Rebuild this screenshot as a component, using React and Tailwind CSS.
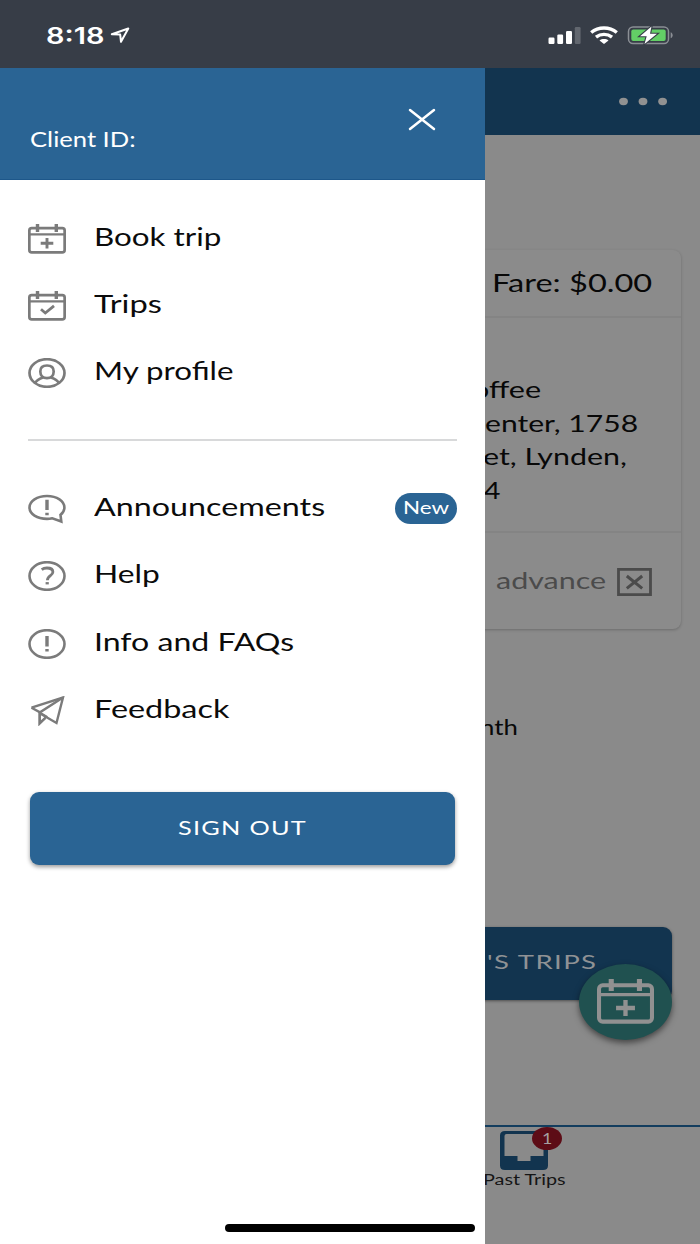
import { useLayoutEffect, useRef, useState } from "react";
import clsx from "clsx";

// Stretches one line of text horizontally so that it fills its box.
function FitText({ className, children }) {
  const outer = useRef(null);
  const inner = useRef(null);
  const [scale, setScale] = useState(1);
  useLayoutEffect(() => {
    setScale(outer.current.clientWidth / inner.current.offsetWidth);
  }, [children]);
  return (
    <span ref={outer} className={clsx("block shrink-0 whitespace-nowrap text-left", className)}>
      <span ref={inner} className="inline-block origin-left" style={{ transform: `scaleX(${scale})` }}>
        {children}
      </span>
    </span>
  );
}

function CalendarIcon({ className, check }) {
  return (
    <svg viewBox="0 0 38 30" preserveAspectRatio="none" className={className} fill="none" stroke="currentColor" strokeWidth="2.7">
      <rect x="1.35" y="4.2" width="35.3" height="24.2" rx="2.4" />
      <path d="M1.25 10.4h35.3" strokeWidth="2.3" />
      <path d="M9.5 0v8M28.3 0v8" strokeWidth="3.4" />
      {check ? <path d="M13 18.2l4.3 3.8 8.7-7.200" strokeWidth="2.800" /> : <path d="M12.7 19.3h12.6M19 14v10.6" strokeWidth="2.9" />}
    </svg>
  );
}

function ProfileIcon({ className }) {
  return (
    <svg viewBox="0 0 38 30" className={className} fill="none" stroke="currentColor" strokeWidth="2.700">
      <ellipse cx="19" cy="15" rx="17.5" ry="13.800" />
      <path d="M19 7.500c-4.600 0-6.700 2.300-6.700 6s2.500 6.700 6.700 6.700 6.700-3 6.700-6.700-2.100-6-6.700-6z" />
      <path d="M7 25.200c1.400-2.700 4-4.300 8-5.700M31 25.200c-1.400-2.700-4-4.300-8-5.700" />
    </svg>
  );
}

function AnnouncementIcon({ className }) {
  return (
    <svg viewBox="0 0 38 30" className={className} fill="none" stroke="currentColor" strokeWidth="2.600">
      <path d="M33.300 27.500L24.300 24.300C22.500 24.700 20.700 24.900 19 24.900 9 24.900 1.500 20 1.500 13.500S9 2 19 2s17.400 5.100 17.400 11.500c0 3-1.300 5.400-3.900 7.400z" />
      <path d="M19 5.700v10.300M19 18.700v2.600" strokeWidth="3.400" />
    </svg>
  );
}

function HelpIcon({ className }) {
  return (
    <svg viewBox="0 0 38 30" className={className} fill="none" stroke="currentColor" strokeWidth="2.600">
      <ellipse cx="19" cy="15" rx="17.500" ry="13.800" />
      <path d="M13.700 8.600c1.500-1.200 3.200-1.600 5.200-1.600 3.700 0 6 1.500 6 4 0 3.700-5.500 3.600-5.500 8.300" strokeWidth="2.800" />
      <path d="M19.200 21.100v2.300" strokeWidth="3.200" />
    </svg>
  );
}

function InfoIcon({ className }) {
  return (
    <svg viewBox="0 0 38 30" className={className} fill="none" stroke="currentColor" strokeWidth="2.600">
      <ellipse cx="19" cy="15" rx="17.500" ry="13.800" />
      <path d="M19 7v10.400M19 20.100v2.500" strokeWidth="3.400" />
    </svg>
  );
}

function FeedbackIcon({ className }) {
  return (
    <svg viewBox="0 0 38 30" className={className} fill="none" stroke="currentColor" strokeWidth="2.400">
      <path d="M3.500 11.700L35 1.500l-6.500 25.500-15.500-9" />
      <path d="M3.500 11.700l8.500 4.600L35 1.500" />
      <path d="M11.500 16v11.700l6-5.700" />
      <path d="M12 16.500l6.500 4-6.500 6z" strokeWidth="1.800" />
    </svg>
  );
}

function StatusBar() {
  return (
    <header className="flex h-[68px] shrink-0 items-start bg-[#373d47] pl-[46px] pr-[27px] text-white">
      <FitText className="mt-[18px] h-9 w-[59px] font-['Inter',sans-serif] text-[23px] font-semibold leading-9">8:18</FitText>
      <svg viewBox="0 0 20 17" className="ml-[5px] mt-[27px] h-[17px] w-5" fill="none" stroke="white" strokeWidth="2" strokeLinejoin="round">
        <path d="M1.800 7.200L18.300 1.500l-7.300 13.300-.8-7.200z" />
      </svg>
      <svg viewBox="0 0 33 18" className="ml-auto mt-[26px] h-[18px] w-[33px]" fill="white">
        <rect x="0.500" y="11.500" width="6" height="6.500" rx="1.200" />
        <rect x="9.300" y="8.500" width="5.800" height="9.500" rx="1.200" />
        <rect x="18" y="5" width="6" height="13" rx="1.200" />
        <rect x="26.800" y="1" width="5.800" height="17" rx="1.200" fill="#62676f" />
      </svg>
      <svg viewBox="0 0 28 18" className="ml-[9px] mt-[26px] h-[18px] w-7" fill="none" stroke="white" strokeWidth="3.400">
        <path d="M1.200 6.500C8.500.5 19.500.5 26.800 6.500" />
        <path d="M6 11.100c4.700-3.700 11.300-3.700 16 0" />
        <path d="M14 18l-4.500-3.600c2.600-1.900 6.400-1.900 9 0z" fill="white" stroke="none" />
      </svg>
      <svg viewBox="0 0 46 20" className="ml-[9px] mt-[25px] h-5 w-[46px]">
        <rect x="1.500" y="2" width="40" height="16.500" rx="4.500" fill="none" stroke="#8b8f95" strokeWidth="1.500" />
        <rect x="4.300" y="4.500" width="34.400" height="11.600" rx="2" fill="#63cf66" />
        <path d="M43.700 7.300c2.600.8 2.600 5.200 0 6z" fill="#8b8f95" />
        <path d="M24.500 1.500L13 11.200h6.700l-2.200 7.700L30 8.800h-7z" fill="white" stroke="#373d47" strokeWidth="2.200" paintOrder="stroke" />
      </svg>
    </header>
  );
}

const primary = [
  { label: "Book trip", icon: CalendarIcon, width: "w-[128px]" },
  { label: "Trips", icon: CalendarIcon, check: true, width: "w-[68px]" },
  { label: "My profile", icon: ProfileIcon, width: "w-[140px]" },
];

const secondary = [
  { label: "Announcements", icon: AnnouncementIcon, width: "w-[231px]", badge: "New" },
  { label: "Help", icon: HelpIcon, width: "w-[66px]" },
  { label: "Info and FAQs", icon: InfoIcon, width: "w-[200px]" },
  { label: "Feedback", icon: FeedbackIcon, width: "w-[136px]" },
];

function MenuRow({ label, icon: Icon, width, badge, check }) {
  return (
    <li className="flex h-[67.4px] items-center">
      {check ? (
        <CalendarIcon check className="mt-[5px] h-[30px] w-[38px] text-[#7b7b7b]" />
      ) : (
        <Icon className="mt-[5px] h-[30px] w-[38px] text-[#7b7b7b]" />
      )}
      <FitText className={clsx("-mt-px ml-[27.5px] text-[25px] leading-[34px] text-[#0b0b0b]", width)}>{label}</FitText>
      {badge && (
        <span className="ml-auto mt-1 flex h-[31px] w-[62px] items-start justify-center rounded-full bg-[#2a6494]">
          <FitText className="w-[46px] text-[18px] leading-[29px] text-white">{badge}</FitText>
        </span>
      )}
    </li>
  );
}

function Drawer() {
  return (
    <aside className="absolute inset-y-0 left-0 w-[485px] bg-white">
      <div className="flex h-[112px] items-start justify-between border-b border-[#1d578a] bg-[#2a6494] pl-[30px] pr-[49px] text-white">
        <FitText className="mt-[55px] w-[106px] text-[21px] leading-8">Client ID:</FitText>
        <svg viewBox="0 0 28 23" className="mt-10 h-[23px] w-7" stroke="white" strokeWidth="2.500" strokeLinecap="round">
          <path d="M2 2l24 19M26 2L2 21" />
        </svg>
      </div>
      <nav className="px-7 pt-[22.500px]">
        <ul>{primary.map((item) => <MenuRow key={item.label} {...item} />)}</ul>
        <hr className="mb-[32px] mt-[34px] border-t-2 border-[#d8d9da]" />
        <ul>{secondary.map((item) => <MenuRow key={item.label} {...item} />)}</ul>
      </nav>
      <button className="ml-[30px] mt-[49.500px] flex h-[73px] w-[425px] items-start justify-center rounded-[9px] bg-[#2a6494] pt-[19px] text-white shadow-[0_2px_4px_rgba(0,0,0,0.4)]">
        <FitText className="w-[129px] text-[20px] leading-8 tracking-[1px]">SIGN OUT</FitText>
      </button>
    </aside>
  );
}

function TripCard() {
  return (
    <section className="ml-7 mr-[19px] mt-[115px] h-[379px] rounded-lg bg-[#8b8b8b] shadow-[0_1px_3px_rgba(0,0,0,0.22)]">
      <div className="flex h-[68px] justify-end border-b-2 border-[#848484] pr-[29px] pt-[15px]">
        <FitText className="w-[160px] text-[25px] leading-[34px]">Fare: $0.00</FitText>
      </div>
      <div className="flex h-[215px] flex-col items-start border-b-2 border-[#848484] pl-[457px] pt-[55px] text-[23px] leading-[33.7px]">
        <FitText className="-ml-[13px] w-[69px]">offee</FitText>
        <FitText className="w-[153px]">enter, 1758</FitText>
        <FitText className="-ml-[2px] w-[144px]">et, Lynden,</FitText>
        <FitText className="-ml-px w-[16px]">4</FitText>
      </div>
      <div className="flex items-start justify-end pr-[29px] pt-[33px] text-[#4b4b4b]">
        <FitText className="mr-[11px] w-[110px] text-[23px] leading-7">advance</FitText>
        <svg viewBox="0 0 35 28" className="mt-[2px] h-7 w-[35px]" fill="none" stroke="currentColor" strokeWidth="2.800">
          <path d="M1.500 1.400h32v25.200h-32z" />
          <path d="M9.800 8l15.400 12.400M25.200 8L9.800 20.400" strokeWidth="3" />
        </svg>
      </div>
    </section>
  );
}

function TripsPage() {
  return (
    <main className="flex h-full flex-col bg-[#8a8a8a] text-[#080808]">
      <div className="flex h-[67px] shrink-0 justify-end bg-[#12344f] pr-8 pt-[29px]">
        <svg viewBox="0 0 50 10" className="h-[10px] w-[50px]" fill="#919191">
          <ellipse cx="5.500" cy="4.500" rx="4.400" ry="3.700" />
          <ellipse cx="25" cy="4.500" rx="4.400" ry="3.700" />
          <ellipse cx="44.600" cy="4.500" rx="4.400" ry="3.700" />
        </svg>
      </div>
      <TripCard />
      <FitText className="ml-[480px] mt-[82px] w-[38px] text-[21px] leading-8">nth</FitText>
      <div className="relative ml-7 mr-7 mt-[184px] flex h-[73px] items-start justify-end rounded-[9px] bg-[#12344f] pr-[75px] pt-[18px] text-[#8f9295] shadow-[0_1px_3px_rgba(0,0,0,0.45)]">
        <FitText className="w-[110px] text-[20px] leading-8 tracking-[1px]">'S TRIPS</FitText>
        <button className="absolute right-0 top-[37px] flex h-[76px] w-[93px] items-center justify-center rounded-[50%] bg-[#205150] text-[#919191] shadow-[0_3px_6px_rgba(0,0,0,0.5)]">
          <CalendarIcon className="-mt-[2px] h-[45px] w-[57px]" />
        </button>
      </div>
      <footer className="mt-auto h-[119px] border-t-[2px] border-[#133d5e] pl-[483px] pt-[4px]">
        <div className="relative ml-[17px] w-[49px]">
          <svg viewBox="0 0 48 39" className="h-[39px] w-12" fill="#12344f">
            <path fillRule="evenodd" d="M5 0h38q5 0 5 4.500v30q0 4.500-5 4.500H5q-5 0-5-4.500v-30Q0 0 5 0zm1.500 3Q4.500 3 4.500 5v20h13v5h13v-5h13V5q0-2-2-2z" />
          </svg>
          <span className="absolute -top-[4px] left-[32px] flex h-[23px] w-[30px] items-start justify-center rounded-[50%] bg-[#5d0c16] text-[16px] leading-[22px] text-[#a5a0a1]">
            <FitText className="w-[10px]">1</FitText>
          </span>
        </div>
        <FitText className="w-[83px] text-[15.500px] leading-[18px] text-[#151515]">Past Trips</FitText>
      </footer>
    </main>
  );
}

export default function App() {
  return (
    <div className="relative flex h-[1244px] w-[700px] flex-col overflow-hidden font-['Lato',sans-serif]">
      <StatusBar />
      <div className="relative min-h-0 flex-1">
        <TripsPage />
        <Drawer />
      </div>
      <div className="absolute bottom-[12.500px] left-[225px] h-[8px] w-[250px] rounded-full bg-black" />
    </div>
  );
}
